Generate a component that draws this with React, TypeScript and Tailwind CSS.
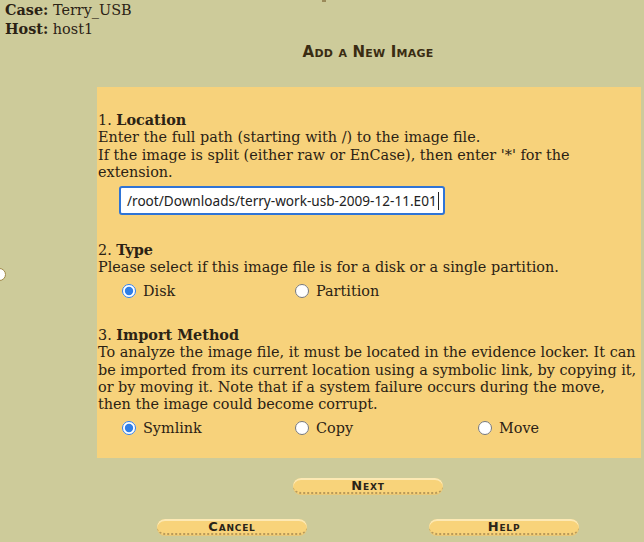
import React from "react";

const serif = { fontFamily: '"DejaVu Serif", serif' };

function PillButton({ label }: { label: string }) {
  return (
    <div className="relative w-[150px] h-[16px] rounded-full bg-[#f8d37a] border-b-2 border-dotted border-[#b89a5a] shadow-[inset_0_2px_0_#fde9b4,0_1px_0_#e8c878] flex items-center justify-center">
      <span
        className="text-[13px] font-bold text-[#2a2418] tracking-[0.8px] [font-variant:small-caps] leading-none"
        style={{ fontFamily: '"DejaVu Sans", sans-serif' }}
      >
        {label}
      </span>
    </div>
  );
}

function Radio({ label, checked }: { label: string; checked?: boolean }) {
  return (
    <label className="flex items-center gap-[7px]">
      <input type="radio" defaultChecked={checked} name={label} className="m-0 w-[14px] h-[14px] accent-[#2f7ee6]" readOnly />
      <span>{label}</span>
    </label>
  );
}

export default function App() {
  return (
    <div className="relative w-[644px] h-[542px] overflow-hidden bg-[#cdcb9a] text-[#2b2214] text-[14.4px] leading-[17.3px]" style={serif}>
      <div className="absolute left-[-7px] top-[268px] w-[13px] h-[13px] rounded-full bg-white border border-[#a08848]" />
      <div className="absolute left-[322px] top-0 w-[4px] h-[2px] bg-[#9a8a5a]" />
      <div className="pl-[5px] pt-[1px] leading-[17.5px]">
        <div><b>Case:</b> Terry_USB</div>
        <div><b>Host:</b> host1</div>
      </div>
      <div className="flex justify-center pl-[92px] mt-[4px] leading-[20px]">
        <span
          className="text-[15px] font-bold tracking-[0.2px] [font-variant:small-caps] text-[#3a2c12]"
          style={{ fontFamily: '"DejaVu Sans", sans-serif' }}
        >
          Add a New Image
        </span>
      </div>
      <div className="absolute left-[97px] top-[87px] w-[544px] h-[371px] bg-[#f7d27b] pt-[24px] pl-[1px]">
        <div>1. <b>Location</b></div>
        <div>Enter the full path (starting with /) to the image file.</div>
        <div className="pr-[40px]">If the image is split (either raw or EnCase), then enter '*' for the extension.</div>
        <div className="pl-[21px] pt-[5px]">
          <div
            className="w-[326px] h-[29px] bg-white border-2 border-[#2f74d6] rounded-[3px] flex items-center pl-[6px] text-[13.6px] text-[#222] whitespace-nowrap"
            style={{ fontFamily: '"Noto Sans", "Open Sans", sans-serif' }}
          >
            /root/Downloads/terry-work-usb-2009-12-11.E01<span className="inline-block w-[1px] h-[18px] bg-[#222] ml-[1px]" />
          </div>
        </div>
        <div className="mt-[26px]">2. <b>Type</b></div>
        <div>Please select if this image file is for a disk or a single partition.</div>
        <div className="flex pl-[24px] mt-[6px]">
          <div className="w-[173px]"><Radio label="Disk" checked /></div>
          <div><Radio label="Partition" /></div>
        </div>
        <div className="mt-[26px]">3. <b>Import Method</b></div>
        <div className="pr-[2px]">
          To analyze the image file, it must be located in the evidence locker. It can be imported from its current location using a symbolic link, by copying it, or by moving it. Note that if a system failure occurs during the move, then the image could become corrupt.
        </div>
        <div className="flex pl-[24px] mt-[6px]">
          <div className="w-[173px]"><Radio label="Symlink" checked /></div>
          <div className="w-[183px]"><Radio label="Copy" /></div>
          <div><Radio label="Move" /></div>
        </div>
      </div>
      <div className="absolute left-[293px] top-[478px]">
        <PillButton label="Next" />
      </div>
      <div className="absolute left-[157px] top-[519px] flex gap-[122px]">
        <PillButton label="Cancel" />
        <PillButton label="Help" />
      </div>
    </div>
  );
}
